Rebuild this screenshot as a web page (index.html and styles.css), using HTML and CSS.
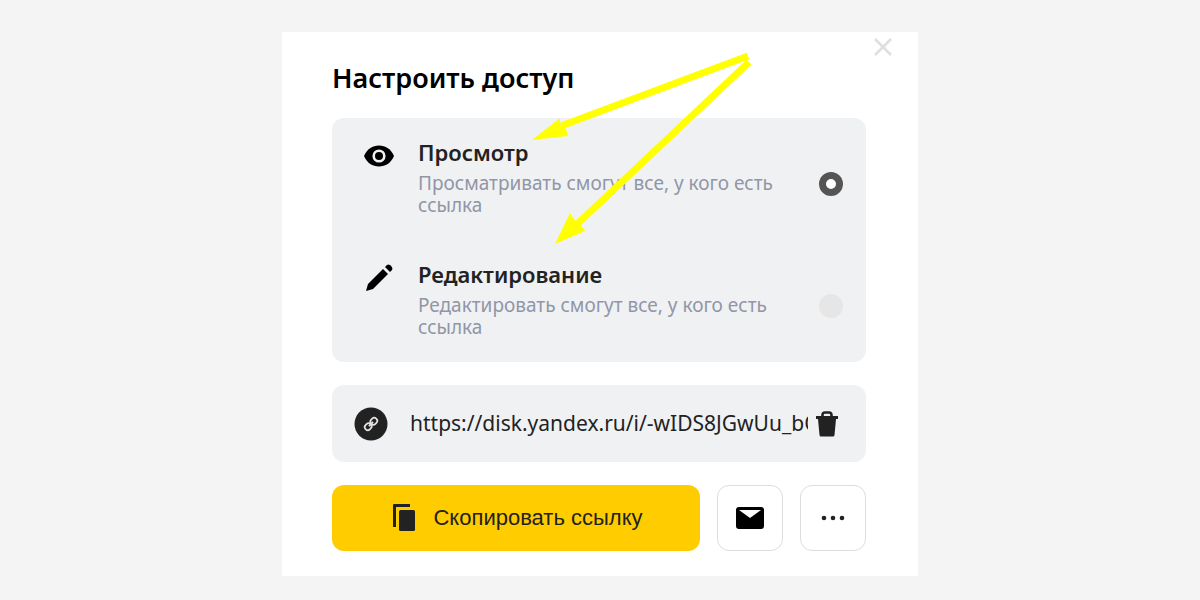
FILE: index.html
```html
<!DOCTYPE html>
<html lang="ru">
<head>
    <meta charset="UTF-8">
    <meta name="viewport" content="width=device-width, initial-scale=1.0">
    <title>Настроить доступ</title>
    <link rel="stylesheet" href="styles.css">
</head>
<body>

    <main class="dialog">
        <button type="button" class="close" aria-label="Закрыть">
            <svg width="18" height="18" viewBox="0 0 18 18"><path d="M1 1l16 16M17 1L1 17" stroke="#dedfe2" stroke-width="2.6"/></svg>
        </button>

        <h1>Настроить доступ</h1>

        <div class="options">
            <label class="option" for="view">
                <svg class="option-icon" width="30" height="30" viewBox="0 0 30 30">
                    <path d="M0 15C3 8 8.500 4.500 15 4.500S27 8 30 15C27 22 21.500 25.500 15 25.500S3 22 0 15z"/>
                    <circle cx="15" cy="15" r="5.300" fill="#000" stroke="#f0f1f3" stroke-width="2.600"/>
                </svg>
                <span class="option-text">
                    <span class="option-title">Просмотр</span>
                    <span class="option-note">Просматривать смогут все, у кого есть ссылка</span>
                </span>
                <input type="radio" class="radio" id="view" name="access" checked>
            </label>
            <label class="option" for="edit">
                <svg class="option-icon" width="30" height="30" viewBox="0 0 30 30">
                    <path d="M2 28L4 21 19 6l5 5L9 26z"/>
                    <path d="M21 4l2-2q1.500-1.200 3.200 .2l1.500 1.500q1.400 1.700 .3 3.300l-2 2z"/>
                </svg>
                <span class="option-text">
                    <span class="option-title">Редактирование</span>
                    <span class="option-note">Редактировать смогут все, у кого есть ссылка</span>
                </span>
                <input type="radio" class="radio" id="edit" name="access">
            </label>
        </div>

        <div class="link-row">
            <svg width="34" height="34" viewBox="0 0 34 34">
                <circle cx="17" cy="17" r="16.500" fill="#222"/>
                <g transform="rotate(-45 17 17)" fill="none" stroke="#e4e4e4" stroke-width="1.700">
                    <rect x="9.500" y="14" width="7" height="6" rx="2.800"/>
                    <rect x="17.500" y="14" width="7" height="6" rx="2.800"/>
                    <path d="M14 17h6"/>
                </g>
            </svg>
            <input type="text" class="link" aria-label="Ссылка" value="https://disk.yandex.ru/i/-wIDS8JGwUu_bQ" readonly>
            <button type="button" class="trash" aria-label="Удалить ссылку">
                <svg width="22" height="26" viewBox="0 0 22 26" fill="#222">
                    <path d="M6.500 6V4q0-2.500 2.500-2.500h4q2.500 0 2.500 2.500v2" fill="none" stroke="#222" stroke-width="2.600"/>
                    <path d="M0 5h22v3h-2l-1.500 16q-.2 1.500-1.500 1.500H5Q3.700 25.500 3.500 24L2 8H0z"/>
                </svg>
            </button>
        </div>

        <div class="actions">
            <button type="button" class="copy">
                <svg width="22" height="28" viewBox="0 0 22 28" fill="#222">
                    <path d="M0 1q0-1 1-1h16v3H3v20H0z"/>
                    <rect x="6" y="6" width="16" height="21" rx="1.500"/>
                </svg>
                Скопировать ссылку
            </button>
            <button type="button" class="square" aria-label="Отправить по почте">
                <svg width="28" height="24" viewBox="0 0 28 24">
                    <rect y="1" width="28" height="22" rx="3"/>
                    <path d="M3 4h22l-11 8z" fill="#fff"/>
                </svg>
            </button>
            <button type="button" class="square" aria-label="Ещё">
                <svg width="24" height="6" viewBox="0 0 24 6" fill="#222">
                    <circle cx="3" cy="3" r="2.300"/>
                    <circle cx="12" cy="3" r="2.300"/>
                    <circle cx="21" cy="3" r="2.300"/>
                </svg>
            </button>
        </div>

        <!-- arrows pointing at the two options -->
        <svg class="arrows" width="220" height="196" viewBox="0 0 220 196" fill="#ff0">
            <path d="M217 7L30 77M218 13L42 179" stroke="#ff0" stroke-width="7"/>
            <path d="M1 91L29 69l0 7 6 4 2 7z"/>
            <path d="M24 195L39 164l4 6 7 7 4 5z"/>
        </svg>
    </main>

</body>
</html>
```

FILE: styles.css
```css
* {
    box-sizing: border-box;
}
body {
    margin: 0;
    padding: 32px 20px 24px;
    background-color: #f4f4f4;
    font-family: "Noto Sans", sans-serif;
    color: #222;
}
button {
    padding: 0;
    border: none;
    background: none;
    cursor: pointer;
}
svg {
    display: block;
    flex-shrink: 0;
}
.dialog {
    position: relative;
    max-width: 636px;
    margin: 0 auto;
    padding: 28px 52px 25px 50px;
    background-color: #fff;
}
.close {
    position: absolute;
    top: 6px;
    right: 26px;
}
h1 {
    margin: 0 0 22px;
    font-size: 27px;
    line-height: 36px;
    font-weight: 600;
    color: #000;
}
.options {
    margin-bottom: 23px;
    border-radius: 12px;
    background-color: #f0f1f3;
}
.option {
    display: flex;
    align-items: flex-start;
    gap: 24px;
    padding: 20px 23px 24px 32px;
    cursor: pointer;
}
.option-icon {
    margin-top: 3px;
}
.option-text {
    flex: 1;
}
.option-title,
.option-note {
    display: block;
}
.option-title {
    margin-bottom: 6px;
    font-size: 22px;
    line-height: 28px;
    font-weight: 600;
}
.option-note {
    font-size: 19px;
    line-height: 22px;
    color: #9196a6;
}
.radio {
    appearance: none;
    width: 24px;
    height: 24px;
    margin: 34px 0 0;
    border-radius: 50%;
    background-color: #e6e6e6;
}
.radio:checked {
    border: 7px solid #555;
    background-color: #fff;
}
.link-row {
    display: flex;
    align-items: center;
    margin-bottom: 23px;
    padding: 21px 28px 21px 22px;
    border-radius: 12px;
    background-color: #f0f1f3;
}
.link {
    flex: 1;
    min-width: 0;
    height: 35px;
    margin: 0 8px 0 22px;
    padding: 0 0 2px;
    border: none;
    background: none;
    font-family: inherit;
    font-size: 21px;
    color: #222;
}
.actions {
    display: flex;
    gap: 17px;
}
.copy {
    display: flex;
    flex: 1;
    align-items: center;
    justify-content: center;
    gap: 18px;
    height: 66px;
    padding-left: 4px;
    border-radius: 12px;
    background-color: #fc0;
    font-family: "Liberation Sans", Arial, sans-serif;
    font-size: 22px;
    color: #222;
}
.square {
    display: flex;
    align-items: center;
    justify-content: center;
    width: 66px;
    height: 66px;
    border: 1px solid #ddd;
    border-radius: 12px;
}
.arrows {
    position: absolute;
    top: 17px;
    left: 249px;
    pointer-events: none;
}
```
